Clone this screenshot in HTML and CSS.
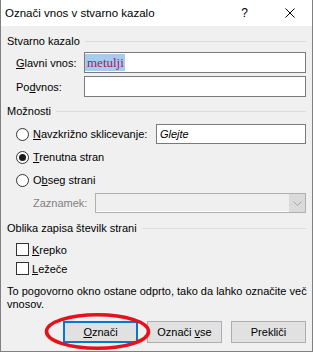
FILE: index.html
```html
<!DOCTYPE html>
<html lang="sl">
<head>
<meta charset="UTF-8" />
<title>Označi vnos v stvarno kazalo</title>
<link rel="stylesheet" href="styles.css">
</head>
<body>
<div class="dialog">
    <div class="titlebar">
        <span class="title">Označi vnos v stvarno kazalo</span>
        <span class="tb-btn help">?</span>
        <span class="tb-btn close">
            <svg width="10" height="10" viewBox="0 0 10 10"><path d="M0.5 0.5L9.5 9.5M9.5 0.5L0.5 9.5" stroke="#000" stroke-width="1" fill="none"/></svg>
        </span>
    </div>

    <div class="content">
        <div class="group-title">Stvarno kazalo</div>
        <div class="field-row first">
            <span class="field-label"><u>G</u>lavni vnos:</span>
            <div class="textbox"><span class="sel">metulji</span></div>
        </div>
        <div class="field-row">
            <span class="field-label">Po<u>d</u>vnos:</span>
            <div class="textbox"></div>
        </div>

        <div class="group-title gt-options">Možnosti</div>
        <div class="opt-row first">
            <span class="radio"></span>
            <span class="opt-label"><u>N</u>avzkrižno sklicevanje:</span>
            <div class="textbox small"><i>Glejte</i></div>
        </div>
        <div class="opt-row">
            <span class="radio checked"></span>
            <span class="opt-label"><u>T</u>renutna stran</span>
        </div>
        <div class="opt-row">
            <span class="radio"></span>
            <span class="opt-label">O<u>b</u>seg strani</span>
        </div>
        <div class="opt-row sub">
            <span class="disabled">Zaznamek:</span>
            <div class="combo">
                <span class="combo-btn">
                    <svg width="9" height="5" viewBox="0 0 9 5"><path d="M0.5 0.5L4.5 4.5L8.5 0.5" stroke="#a8a8a8" fill="none"/></svg>
                </span>
            </div>
        </div>

        <div class="group-title gt-format">Oblika zapisa številk strani</div>
        <div class="check-row first">
            <span class="checkbox"></span>
            <span class="check-label"><u>K</u>repko</span>
        </div>
        <div class="check-row">
            <span class="checkbox"></span>
            <span class="check-label"><u>L</u>ežeče</span>
        </div>

        <p class="note">To pogovorno okno ostane odprto, tako da lahko označite več<br>vnosov.</p>

        <div class="buttons">
            <button class="btn default"><u>O</u>znači</button>
            <button class="btn">Označi <u>v</u>se</button>
            <button class="btn">Prekliči</button>
        </div>
    </div>

    <!-- rdeča oznaka čez gumb -->
    <svg class="circle-mark" width="108" height="40" viewBox="0 0 108 40">
        <ellipse cx="53.5" cy="19.5" rx="51" ry="16.8" fill="none" stroke="#e5121b" stroke-width="3.6"/>
    </svg>
</div>
</body>
</html>
```

FILE: styles.css
```css
*{margin:0;padding:0;box-sizing:border-box}
body{
    font-family:"Liberation Sans",Arial,sans-serif;
    font-size:11px;
    color:#000;
    background:#f0f0f0;
}
.dialog{
    position:relative;
    width:313px;
    height:352px;
    background:#f0f0f0;
    border:1px solid #808080;
    border-top:0;
}
.titlebar{
    display:flex;
    align-items:center;
    height:26px;
    background:#fff;
    padding-left:4px;
}
.title{
    font-size:11.5px;
    flex:1;
    white-space:nowrap;
}
.tb-btn{
    width:45px;
    height:26px;
    display:flex;
    align-items:center;
    justify-content:center;
}
.help{font-size:12px}
.close svg{display:block}

.content{padding:8px 6px 0 6px}

.group-title{
    display:flex;
    align-items:center;
    height:14px;
    line-height:14px;
    white-space:nowrap;
}
.group-title::after{
    content:'';
    flex:1;
    height:1px;
    background:#dcdcdc;
    margin-left:5px;
}
.gt-options{margin-top:7px}
.gt-format{margin-top:8px}

.field-row{
    display:flex;
    align-items:center;
    height:21px;
    padding-left:9px;
    margin-top:3px;
}
.field-row.first{margin-top:4px}
.field-label{width:68px;white-space:nowrap}
.textbox{
    flex:1;
    height:100%;
    background:#fff;
    border:1px solid #7a7a7a;
    display:flex;
    align-items:center;
}
.textbox.small{
    flex:none;
    width:150px;
    margin-left:auto;
    padding-left:3px;
}
.sel{
    display:inline-block;
    height:17px;
    line-height:17px;
    padding:0 1px 0 2px;
    background:#a6caf0;
    color:#a4205e;
    font-family:"Liberation Serif","Times New Roman",serif;
    font-size:13px;
}

.opt-row{
    display:flex;
    align-items:center;
    height:20px;
    padding-left:9px;
    margin-top:3px;
}
.opt-row.first{margin-top:6px}
.opt-row.sub{padding-left:26px}
.radio{
    width:13px;
    height:13px;
    border:1px solid #333;
    border-radius:50%;
    background:#fff;
    display:flex;
    align-items:center;
    justify-content:center;
}
.radio.checked::after{
    content:'';
    width:7px;
    height:7px;
    border-radius:50%;
    background:#1a1a1a;
}
.opt-label{margin-left:4px;white-space:nowrap}
.disabled{color:#7f7f7f}
.combo{
    margin-left:auto;
    width:211px;
    height:100%;
    border:1px solid #b0b0b0;
    background:#efefef;
    box-shadow:inset 0 -1px 0 #fcfcfc;
    display:flex;
    justify-content:flex-end;
}
.combo-btn{
    width:16px;
    height:100%;
    background:#dadada;
    display:flex;
    align-items:center;
    justify-content:center;
}

.check-row{
    display:flex;
    align-items:center;
    height:19px;
    padding-left:9px;
}
.check-row.first{margin-top:5px}
.checkbox{
    width:13px;
    height:13px;
    border:1px solid #333;
    background:#fff;
}
.check-label{margin-left:3px}

.note{
    margin-top:7px;
    line-height:13px;
    white-space:nowrap;
}

.buttons{
    display:flex;
    justify-content:flex-end;
    gap:9px;
    margin-top:10px;
}
.btn{
    width:75px;
    height:22px;
    border:1px solid #adadad;
    background:#e1e1e1;
    font-family:inherit;
    font-size:11px;
    color:#000;
}
.btn.default{
    border-color:#0078d7;
    box-shadow:inset 0 0 0 1px #0078d7;
}

.circle-mark{
    position:absolute;
    left:43px;
    top:312px;
    pointer-events:none;
}
```
